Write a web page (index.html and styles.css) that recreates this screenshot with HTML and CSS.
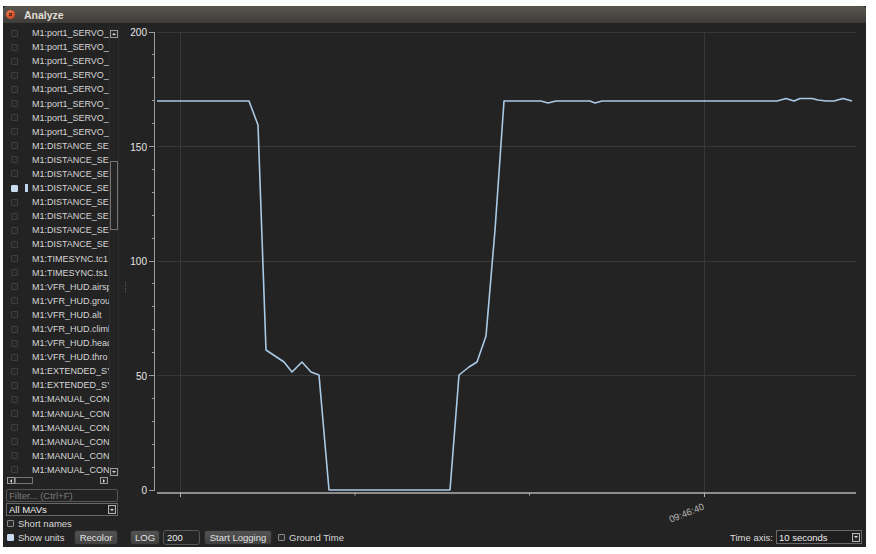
FILE: index.html
```html
<!DOCTYPE html>
<html>
<head>
<meta charset="utf-8">
<title>Analyze</title>
<link rel="stylesheet" href="styles.css">
</head>
<body>
<div class="window">
  <div class="titlebar">
    <svg class="close" viewBox="0 0 9 9" width="9" height="9">
      <defs><radialGradient id="cg" cx="0.4" cy="0.35" r="0.7"><stop offset="0" stop-color="#f4835a"/><stop offset="1" stop-color="#d0421c"/></radialGradient></defs>
      <circle cx="4.5" cy="4.5" r="4.5" fill="url(#cg)"/>
      <path d="M3 3 L6 6 M6 3 L3 6" stroke="#5a1d0c" stroke-width="1.1"/>
    </svg>
    <span class="title">Analyze</span>
  </div>
  <div class="content">
    <div class="sidebar">
      <div class="listbox">
        <div class="list">
          <div class="row"><span class="cb"></span><span class="sw"></span><span class="name">M1:port1_SERVO_O</span></div>
          <div class="row"><span class="cb"></span><span class="sw"></span><span class="name">M1:port1_SERVO_O</span></div>
          <div class="row"><span class="cb"></span><span class="sw"></span><span class="name">M1:port1_SERVO_O</span></div>
          <div class="row"><span class="cb"></span><span class="sw"></span><span class="name">M1:port1_SERVO_O</span></div>
          <div class="row"><span class="cb"></span><span class="sw"></span><span class="name">M1:port1_SERVO_O</span></div>
          <div class="row"><span class="cb"></span><span class="sw"></span><span class="name">M1:port1_SERVO_O</span></div>
          <div class="row"><span class="cb"></span><span class="sw"></span><span class="name">M1:port1_SERVO_O</span></div>
          <div class="row"><span class="cb"></span><span class="sw"></span><span class="name">M1:port1_SERVO_O</span></div>
          <div class="row"><span class="cb"></span><span class="sw"></span><span class="name">M1:DISTANCE_SEN</span></div>
          <div class="row"><span class="cb"></span><span class="sw"></span><span class="name">M1:DISTANCE_SEN</span></div>
          <div class="row"><span class="cb"></span><span class="sw"></span><span class="name">M1:DISTANCE_SEN</span></div>
          <div class="row"><span class="cb on"></span><span class="sw on"></span><span class="name">M1:DISTANCE_SEN</span></div>
          <div class="row"><span class="cb"></span><span class="sw"></span><span class="name">M1:DISTANCE_SEN</span></div>
          <div class="row"><span class="cb"></span><span class="sw"></span><span class="name">M1:DISTANCE_SEN</span></div>
          <div class="row"><span class="cb"></span><span class="sw"></span><span class="name">M1:DISTANCE_SEN</span></div>
          <div class="row"><span class="cb"></span><span class="sw"></span><span class="name">M1:DISTANCE_SEN</span></div>
          <div class="row"><span class="cb"></span><span class="sw"></span><span class="name">M1:TIMESYNC.tc1</span></div>
          <div class="row"><span class="cb"></span><span class="sw"></span><span class="name">M1:TIMESYNC.ts1</span></div>
          <div class="row"><span class="cb"></span><span class="sw"></span><span class="name">M1:VFR_HUD.airsp</span></div>
          <div class="row"><span class="cb"></span><span class="sw"></span><span class="name">M1:VFR_HUD.grou</span></div>
          <div class="row"><span class="cb"></span><span class="sw"></span><span class="name">M1:VFR_HUD.alt</span></div>
          <div class="row"><span class="cb"></span><span class="sw"></span><span class="name">M1:VFR_HUD.climb</span></div>
          <div class="row"><span class="cb"></span><span class="sw"></span><span class="name">M1:VFR_HUD.head</span></div>
          <div class="row"><span class="cb"></span><span class="sw"></span><span class="name">M1:VFR_HUD.thro</span></div>
          <div class="row"><span class="cb"></span><span class="sw"></span><span class="name">M1:EXTENDED_SY</span></div>
          <div class="row"><span class="cb"></span><span class="sw"></span><span class="name">M1:EXTENDED_SY</span></div>
          <div class="row"><span class="cb"></span><span class="sw"></span><span class="name">M1:MANUAL_CON</span></div>
          <div class="row"><span class="cb"></span><span class="sw"></span><span class="name">M1:MANUAL_CON</span></div>
          <div class="row"><span class="cb"></span><span class="sw"></span><span class="name">M1:MANUAL_CON</span></div>
          <div class="row"><span class="cb"></span><span class="sw"></span><span class="name">M1:MANUAL_CON</span></div>
          <div class="row"><span class="cb"></span><span class="sw"></span><span class="name">M1:MANUAL_CON</span></div>
          <div class="row"><span class="cb"></span><span class="sw"></span><span class="name">M1:MANUAL_CON</span></div>
        </div>
        <div class="vscroll">
          <span class="arrow up"></span>
          <span class="vthumb"></span>
          <span class="arrow down"></span>
        </div>
        <div class="hscroll">
          <span class="harrow left"></span>
          <span class="hthumb"></span>
          <span class="harrow right"></span>
        </div>
      </div>
      <input class="filter" type="text" placeholder="Filter... (Ctrl+F)">
      <div class="combo mavs"><span>All MAVs</span><span class="arrow down"></span></div>
      <label class="check short"><span class="cb"></span>Short names</label>
      <div class="units-row">
        <label class="check"><span class="cb on"></span>Show units</label>
        <button class="btn recolor">Recolor</button>
      </div>
    </div>
    <div class="splitter"><span class="grip"></span></div>
    <div class="main">
      <div class="chart">
        <svg class="plot" viewBox="129 23 737 505" width="737" height="505">
          <g stroke="#383838" stroke-width="1">
            <line x1="157" y1="32.5" x2="856" y2="32.5"/>
            <line x1="157" y1="146.5" x2="856" y2="146.5"/>
            <line x1="157" y1="261.5" x2="856" y2="261.5"/>
            <line x1="157" y1="375.5" x2="856" y2="375.5"/>
            <line x1="180.5" y1="33" x2="180.5" y2="492"/>
            <line x1="704.5" y1="33" x2="704.5" y2="492"/>
          </g>
          <g stroke="#9c9c9c" stroke-width="1">
            <line x1="154.5" y1="32" x2="154.5" y2="491"/>
            <line x1="149" y1="32.5" x2="155" y2="32.5"/>
            <line x1="149" y1="146.5" x2="155" y2="146.5"/>
            <line x1="149" y1="261.5" x2="155" y2="261.5"/>
            <line x1="149" y1="375.5" x2="155" y2="375.5"/>
            <line x1="149" y1="490.5" x2="155" y2="490.5"/>
            <line x1="152" y1="467.5" x2="155" y2="467.5"/>
            <line x1="152" y1="444.5" x2="155" y2="444.5"/>
            <line x1="152" y1="421.5" x2="155" y2="421.5"/>
            <line x1="152" y1="398.5" x2="155" y2="398.5"/>
            <line x1="152" y1="352.5" x2="155" y2="352.5"/>
            <line x1="152" y1="329.5" x2="155" y2="329.5"/>
            <line x1="152" y1="306.5" x2="155" y2="306.5"/>
            <line x1="152" y1="283.5" x2="155" y2="283.5"/>
            <line x1="152" y1="238.5" x2="155" y2="238.5"/>
            <line x1="152" y1="215.5" x2="155" y2="215.5"/>
            <line x1="152" y1="192.5" x2="155" y2="192.5"/>
            <line x1="152" y1="169.5" x2="155" y2="169.5"/>
            <line x1="152" y1="123.5" x2="155" y2="123.5"/>
            <line x1="152" y1="100.5" x2="155" y2="100.5"/>
            <line x1="152" y1="77.5" x2="155" y2="77.5"/>
            <line x1="152" y1="54.5" x2="155" y2="54.5"/>
          </g>
          <g stroke="#b0b0b0">
            <line x1="157" y1="493" x2="856" y2="493" stroke-width="1.6"/>
            <line x1="180.5" y1="493" x2="180.5" y2="497"/>
            <line x1="704.5" y1="493" x2="704.5" y2="497"/>
            <line x1="355" y1="493" x2="355" y2="495.5"/>
            <line x1="529.5" y1="493" x2="529.5" y2="495.5"/>
          </g>
          <g class="ylab">
            <text x="147" y="36">200</text>
            <text x="147" y="150.5">150</text>
            <text x="147" y="265">100</text>
            <text x="147" y="379.5">50</text>
            <text x="147" y="494">0</text>
          </g>
          <text class="xlab" x="705" y="509" transform="rotate(-22 705 509)">09:46:40</text>
          <polyline fill="none" stroke="#a9cae6" stroke-width="1.6" stroke-linejoin="round"
            points="157,101 249,101 258,125 266,350 275,356 284,362 292,372 302,362 311,372 319,375 329,490 450,490 459,375 469,367 477,362 486,336 495,230 504,101 541,101 548,103 556,101 590,101 595,103 602,101 777,101 786,98.5 794,101 800,98.5 812,98.5 818,100 826,101 834,101 843,98.5 852,101"/>
        </svg>
      </div>
      <div class="bottombar">
        <button class="btn log">LOG</button>
        <input class="num" type="text" value="200">
        <button class="btn start">Start Logging</button>
        <label class="check gt"><span class="cb"></span>Ground Time</label>
        <span class="ta-label">Time axis:</span>
        <div class="combo ta"><span>10 seconds</span><span class="arrow down"></span></div>
      </div>
    </div>
  </div>
</div>
</body>
</html>
```
FILE: styles.css
```css
* { box-sizing: border-box; }
html, body { margin: 0; padding: 0; background: #ffffff; }
body { font-family: "Liberation Sans", "DejaVu Sans", Arial, sans-serif; }

.window {
  margin: 6px 0 0 3px;
  width: 863px;
  height: 541px;
  background: #232323;
  display: flex;
  flex-direction: column;
}

.titlebar {
  flex: none;
  height: 17px;
  display: flex;
  align-items: center;
  padding-left: 3px;
  background: linear-gradient(#5a564f, #3e3c38);
  border-radius: 4px 4px 0 0;
}
.close { flex: none; display: block; }
.title {
  margin-left: 9px;
  color: #e2ded5;
  font-weight: bold;
  font-size: 10.5px;
}

.content { flex: 1; display: flex; min-height: 0; }

/* sidebar */
.sidebar {
  flex: none;
  width: 116px;
  padding: 3px 0 2px 3px;
  display: flex;
  flex-direction: column;
}
.listbox {
  display: grid;
  grid-template-columns: 104px 9px;
  grid-template-rows: 451px 8px;
}
.list {
  overflow: hidden;
  border-right: 1px solid #2c2c2c;
}
.row {
  height: 14.1px;
  display: flex;
  align-items: center;
  white-space: nowrap;
  font-size: 9px;
  color: #d6d6d6;
}
.cb {
  flex: none;
  width: 7px;
  height: 7px;
  border: 1px solid #3e3e3e;
  border-radius: 1px;
  background: #262626;
}
.row .cb { margin-left: 5px; }
.cb.on { background: #c9dcef; border-color: #c9dcef; }
.sw { flex: none; width: 3px; height: 8px; margin-left: 7px; }
.sw.on { background: #b9d3ea; }
.name { margin-left: 4px; }

.vscroll {
  display: flex;
  flex-direction: column;
  align-items: flex-start;
  padding-top: 4px;
  border-right: 1px solid #2c2c2c;
}
.vthumb {
  flex: none;
  width: 8px;
  height: 69px;
  margin-top: 123px;
  border: 1px solid #767676;
}
.vscroll .down { margin-top: auto; margin-bottom: 1px; }

.arrow, .harrow {
  flex: none;
  width: 8px;
  height: 8px;
  border: 1px solid #9a9a9a;
  background: #2a2a2a;
  display: flex;
  align-items: center;
  justify-content: center;
}
.arrow::after, .harrow::after { content: ""; width: 0; height: 0; }
.arrow.up::after { border-left: 2px solid transparent; border-right: 2px solid transparent; border-bottom: 2px solid #dcdcdc; }
.arrow.down::after { border-left: 2px solid transparent; border-right: 2px solid transparent; border-top: 2px solid #dcdcdc; }

.hscroll {
  display: flex;
  align-items: flex-start;
  padding-left: 1px;
  padding-right: 2px;
}
.harrow { height: 7px; }
.harrow.left::after { border-top: 2px solid transparent; border-bottom: 2px solid transparent; border-right: 2px solid #dcdcdc; }
.harrow.right::after { border-top: 2px solid transparent; border-bottom: 2px solid transparent; border-left: 2px solid #dcdcdc; }
.harrow.right { margin-left: auto; }
.hthumb { flex: none; width: 18px; height: 7px; border: 1px solid #767676; }

.filter {
  margin: 4px 0 0 0;
  width: 112px;
  height: 13px;
  padding: 0 2px;
  border: 1px solid #555555;
  border-radius: 2px;
  background: #232323;
  color: #dddddd;
  font-family: inherit;
  font-size: 9.5px;
  outline: none;
}
.filter::placeholder { color: #7a7a7a; }

.combo {
  display: flex;
  align-items: center;
  justify-content: space-between;
  border: 1px solid #686868;
  background: #1e1e1e;
  color: #eeeeee;
  font-size: 9.5px;
  padding: 0 1px 0 2px;
}
.combo .arrow { border-color: #b4b4b4; width: 8px; height: 9px; }
.mavs { margin-top: 1px; width: 112px; height: 13px; }

.check {
  display: flex;
  align-items: center;
  gap: 4px;
  font-size: 9.5px;
  color: #d8d8d8;
  white-space: nowrap;
}
.check .cb { border-color: #8a8a8a; background: #2a2a2a; margin-left: 1px; }
.check .cb.on { background: #c9dcef; border-color: #c9dcef; }
.short { margin-top: 1px; height: 12px; }
.units-row { height: 16px; display: flex; align-items: center; }

.btn {
  height: 15px;
  padding: 0;
  border: 1px solid #2a2a2a;
  border-radius: 3px;
  background: linear-gradient(#535353, #414141);
  color: #e2e2e2;
  font-family: inherit;
  font-size: 9.5px;
  text-align: center;
}
.recolor { margin-left: auto; margin-right: 1px; width: 44px; }

/* splitter */
.splitter {
  flex: none;
  width: 10px;
  padding: 259px 0 0 6px;
}
.grip {
  display: block;
  width: 1px;
  height: 11px;
  background: repeating-linear-gradient(#5c5c5c 0 1px, transparent 1px 2px);
}

/* main */
.main {
  flex: none;
  width: 737px;
  display: flex;
  flex-direction: column;
}
.chart { flex: none; height: 505px; }
.plot { display: block; }
.ylab text {
  font-family: "Liberation Sans", "DejaVu Sans", sans-serif;
  font-size: 10px;
  fill: #e6e6e6;
  text-anchor: end;
}
.xlab {
  font-family: "Liberation Sans", "DejaVu Sans", sans-serif;
  font-size: 9.5px;
  fill: #b4b4b4;
  text-anchor: end;
}

.bottombar {
  flex: 1;
  display: flex;
  align-items: flex-start;
  padding-top: 2px;
}
.log { margin-left: 1px; width: 30px; }
.num {
  margin-left: 3px;
  width: 37px;
  height: 15px;
  padding: 0 3px;
  border: 1px solid #585858;
  border-radius: 3px;
  background: #262626;
  color: #eeeeee;
  font-family: inherit;
  font-size: 9.5px;
  outline: none;
}
.start { margin-left: 4px; width: 68px; }
.gt { margin-left: 5px; height: 15px; }
.ta-label {
  margin-left: auto;
  height: 15px;
  line-height: 15px;
  font-size: 9.5px;
  color: #dcdcdc;
}
.ta { margin-left: 3px; margin-right: 4px; width: 86px; height: 14px; }
```
